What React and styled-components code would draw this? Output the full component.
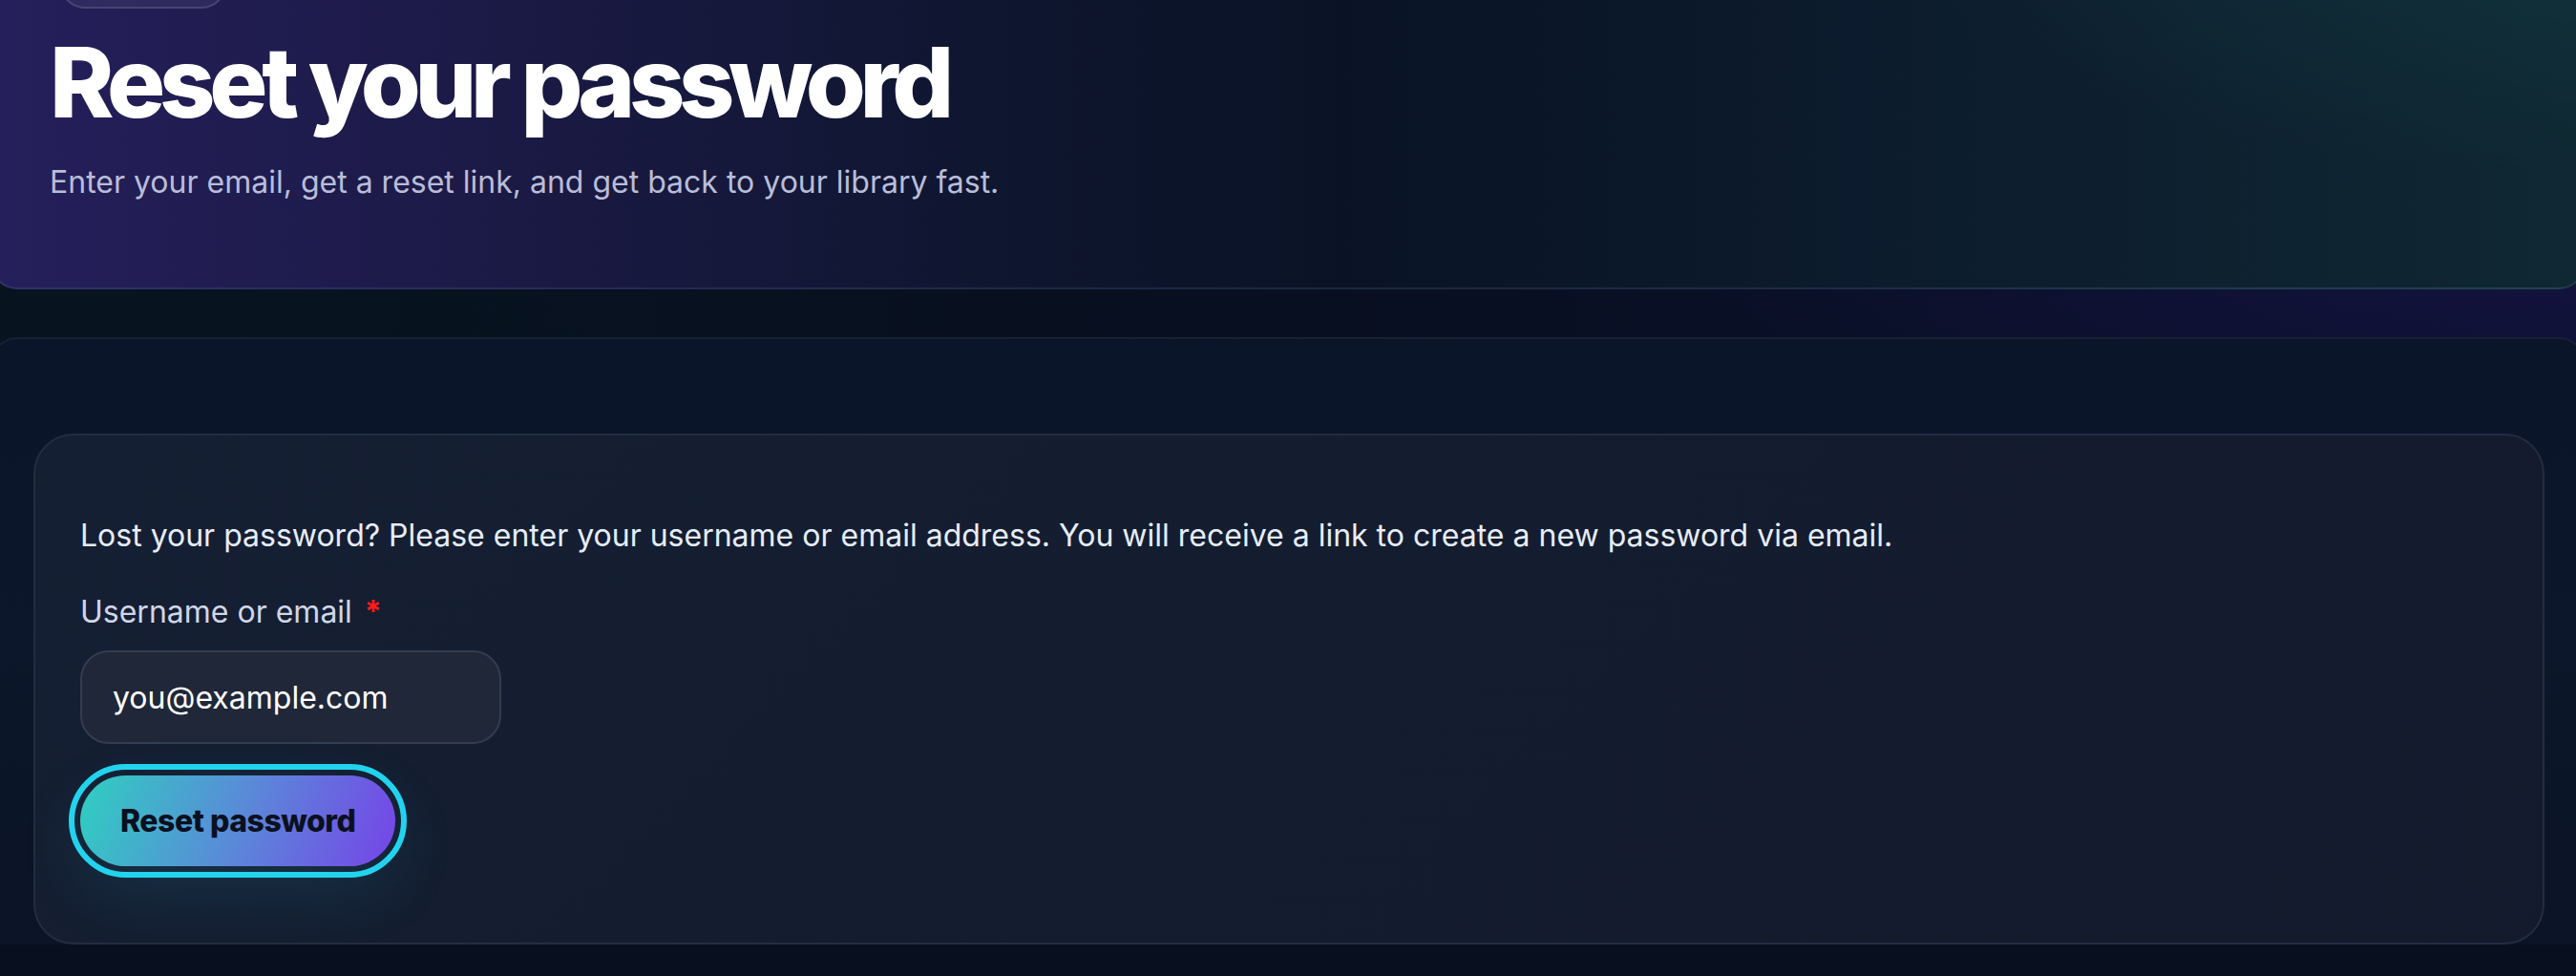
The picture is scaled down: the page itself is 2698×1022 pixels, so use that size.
import styled, { createGlobalStyle } from "styled-components";

const GlobalStyle = createGlobalStyle`
  html,
  body {
    margin: 0;
    padding: 0;
    overflow: hidden;
    background: #08101f;
  }

  body {
    font-family: Inter, "Noto Sans", "Liberation Sans", sans-serif;
    color: #e6edfb;
    -webkit-font-smoothing: antialiased;
  }

  * {
    box-sizing: border-box;
  }
`;

const App = () => {
  return (
    <>
      <GlobalStyle />
      <Page>
        <Hero>
          <Chip aria-hidden="true" />
          <Title>Reset your password</Title>
          <Subtitle>
            Enter your email, get a reset link, and get back to your library
            fast.
          </Subtitle>
        </Hero>

        <Panel>
          <FormCard>
            <Intro>
              Lost your password? Please enter your username or email address.
              You will receive a link to create a new password via email.
            </Intro>
            <Field>
              <Label htmlFor="user_login">
                Username or email <Required>*</Required>
              </Label>
              <Input
                id="user_login"
                type="text"
                defaultValue="you@example.com"
              />
            </Field>
            <SubmitButton type="submit">Reset password</SubmitButton>
          </FormCard>
        </Panel>
      </Page>
    </>
  );
};

export default App;

const Page = styled.main`
  min-height: 100vh;
  margin: -85px -10px 0;
  display: flex;
  flex-direction: column;
  gap: 50px;
  background:
    radial-gradient(
      ellipse 50% 30% at 100% 32%,
      rgba(40, 26, 100, 0.3),
      transparent 70%
    ),
    linear-gradient(90deg, #07141f 0%, #080f20 50%, #0b1030 100%);
`;

const Hero = styled.section`
  display: flex;
  flex-direction: column;
  align-items: flex-start;
  padding: 40px 60px 86px;
  border: 2px solid rgba(120, 140, 200, 0.16);
  border-radius: 28px;
  background:
    radial-gradient(
      ellipse 35% 90% at 100% 0%,
      rgba(20, 60, 66, 0.55),
      transparent 75%
    ),
    linear-gradient(
      90deg,
      #251f5b 0%,
      #1c1a47 18%,
      #0f1630 38%,
      #0a1326 52%,
      #0c1b2d 72%,
      #0f2832 100%
    );
`;

const Chip = styled.span`
  display: block;
  width: 174px;
  height: 52px;
  margin: 0 0 26px 11px;
  border: 2px solid rgba(255, 255, 255, 0.12);
  border-radius: 999px;
  background: rgba(255, 255, 255, 0.06);
`;

const Title = styled.h1`
  margin: 0 0 30px;
  font-size: 102px;
  line-height: 1;
  font-weight: 800;
  letter-spacing: -0.062em;
  color: #ffffff;
`;

const Subtitle = styled.p`
  margin: 0;
  font-size: 32px;
  line-height: 48px;
  color: #b9bdd9;
`;

const Panel = styled.section`
  padding: 99px 41px 0 43px;
  border: 2px solid #182036;
  border-bottom: none;
  border-radius: 28px 28px 0 0;
  background: linear-gradient(
    180deg,
    #0b1529 0%,
    #0c172b 50%,
    #0b1426 100%
  );
  flex: 1;
`;

const FormCard = styled.form`
  display: flex;
  flex-direction: column;
  align-items: flex-start;
  padding: 81px 47px 80px;
  border: 2px solid #232c41;
  border-radius: 42px;
  background: linear-gradient(135deg, #151f33 0%, #131a2c 100%);
`;

const Intro = styled.p`
  margin: 0 0 32px;
  font-size: 32px;
  line-height: 48px;
  color: #e6edfb;
`;

const Field = styled.div`
  display: flex;
  flex-direction: column;
  align-items: flex-start;
  gap: 16px;
  margin-bottom: 33px;
`;

const Label = styled.label`
  font-size: 32px;
  line-height: 48px;
  color: #cfd6e7;
`;

const Required = styled.span`
  margin-left: 4px;
  color: #ff1a1a;
  font-weight: 700;
`;

const Input = styled.input`
  width: 441px;
  height: 98px;
  padding: 0 32px;
  border: 2px solid #343d50;
  border-radius: 30px;
  background: #1f2739;
  color: #ffffff;
  font-family: Inter, "Noto Sans", sans-serif;
  font-size: 32px;
  outline: none;
`;

const SubmitButton = styled.button`
  height: 95px;
  padding: 0 42px;
  border: none;
  border-radius: 999px;
  background: linear-gradient(110deg, #2fcfc1 0%, #5a8ad8 50%, #7644e8 100%);
  color: #0b1020;
  font-family: Inter, "Noto Sans", sans-serif;
  font-size: 32px;
  font-weight: 800;
  letter-spacing: -0.015em;
  cursor: pointer;
  outline: 6px solid #22d3ee;
  outline-offset: 6px;
  box-shadow: 0 24px 70px rgba(34, 180, 200, 0.14);
`;
